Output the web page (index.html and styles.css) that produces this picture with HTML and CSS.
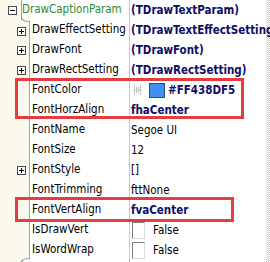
FILE: index.html
```html
<!DOCTYPE html>
<html lang="en">
<head>
    <meta charset="UTF-8">
    <title>Property Inspector</title>
    <link rel="stylesheet" href="styles.css">
</head>
<body>
    <div class="inspector">
        <div class="grid">
            <div class="row head">
                <div class="gut"><span class="tog minus"></span></div>
                <div class="name cat">DrawCaptionParam</div>
                <div class="val b">(TDrawTextParam)</div>
            </div>
            <div class="kids">
                <div class="row">
                    <div class="gut"><span class="tog plus"></span></div>
                    <div class="name">DrawEffectSetting</div>
                    <div class="val b">(TDrawTextEffectSetting)</div>
                </div>
                <div class="row">
                    <div class="gut"><span class="tog plus"></span></div>
                    <div class="name">DrawFont</div>
                    <div class="val b">(TDrawFont)</div>
                </div>
                <div class="row">
                    <div class="gut"><span class="tog plus"></span></div>
                    <div class="name">DrawRectSetting</div>
                    <div class="val b">(TDrawRectSetting)</div>
                </div>
                <div class="row">
                    <div class="gut"></div>
                    <div class="name">FontColor</div>
                    <div class="val b">
                        <svg class="pick" width="11" height="12" viewBox="0 0 11 12">
                            <path d="M0.5 6H10.5M2.5 1V11M8.5 1V11M4.5 3V9M6.5 3V9" stroke="#c4c4c4" fill="none"/>
                        </svg>
                        <span class="swatch"></span>#FF438DF5
                    </div>
                </div>
                <div class="row">
                    <div class="gut"></div>
                    <div class="name">FontHorzAlign</div>
                    <div class="val b">fhaCenter</div>
                </div>
                <div class="row">
                    <div class="gut"></div>
                    <div class="name">FontName</div>
                    <div class="val">Segoe UI</div>
                </div>
                <div class="row">
                    <div class="gut"></div>
                    <div class="name">FontSize</div>
                    <div class="val">12</div>
                </div>
                <div class="row">
                    <div class="gut"><span class="tog plus"></span></div>
                    <div class="name">FontStyle</div>
                    <div class="val">[]</div>
                </div>
                <div class="row">
                    <div class="gut"></div>
                    <div class="name">FontTrimming</div>
                    <div class="val">fttNone</div>
                </div>
                <div class="row">
                    <div class="gut"></div>
                    <div class="name">FontVertAlign</div>
                    <div class="val b">fvaCenter</div>
                </div>
                <div class="row">
                    <div class="gut"></div>
                    <div class="name">IsDrawVert</div>
                    <div class="val"><span class="check"></span>False</div>
                </div>
                <div class="row">
                    <div class="gut"></div>
                    <div class="name">IsWordWrap</div>
                    <div class="val"><span class="check"></span>False</div>
                </div>
            </div>
            <div class="row head">
                <div class="gut"></div>
                <div class="name cat"></div>
                <div class="val"></div>
            </div>
        </div>
        <div class="scroll"></div>
    </div>

    <!-- highlight boxes drawn over the grid -->
    <div class="mark mark-color"></div>
    <div class="mark mark-vert"></div>
</body>
</html>
```

FILE: styles.css
```css
body {
    margin: 0;
    background-color: #ffffff;
    font-family: "DejaVu Sans Condensed", "DejaVu Sans", sans-serif;
    font-size: 11.5px;
    color: #000000;
    overflow: hidden;
}
.inspector {
    display: flex;
    width: 270px;
    height: 262px;
    overflow: hidden;
}
.grid {
    width: 266px;
    flex: none;
}
.scroll {
    width: 4px;
    flex: none;
    background: repeating-conic-gradient(#d4d0c8 0 25%, #ffffff 0 50%) 0 0 / 2px 2px;
}
.row {
    display: flex;
    height: 20px;
    line-height: 19px;
    white-space: nowrap;
}
.gut {
    width: 30px;
    flex: none;
    background-color: #fbf9ee;
    border-right: 1px solid #a3a6a3;
    display: flex;
    align-items: center;
    justify-content: flex-end;
    padding-right: 3px;
    box-sizing: border-box;
}
.head .gut {
    width: 22px;
    padding-right: 4px;
}
.name {
    width: 100px;
    flex: none;
    padding-left: 2px;
    box-sizing: border-box;
    border-right: 1px solid #c9c9c9;
    overflow: hidden;
}
.head .name {
    width: 108px;
    padding-left: 0;
}
.cat {
    color: #2c8a2c;
}
.val {
    flex: 1;
    padding-left: 1px;
    display: flex;
    align-items: center;
    color: #000000;
}
.val.b {
    font-weight: bold;
    color: #0e0e66;
}
.kids {
    position: relative;
}
.kids::before,
.kids::after {
    content: "";
    position: absolute;
    left: 21px;
    width: 8px;
    height: 5px;
    border-left: 1px solid #a3a6a3;
}
.kids::before {
    top: -4px;
    border-bottom: 1px solid #a3a6a3;
    border-bottom-left-radius: 6px;
}
.kids::after {
    bottom: -4px;
    border-top: 1px solid #a3a6a3;
    border-top-left-radius: 6px;
}
.kids .row:first-child .gut {
    border-top: 2px solid transparent;
}
.kids .row:last-child .gut {
    border-bottom: 2px solid transparent;
}
.tog {
    width: 9px;
    height: 9px;
    box-sizing: border-box;
    border: 1px solid #4a4a4a;
    background-color: #ffffff;
    position: relative;
}
.tog::before {
    content: "";
    position: absolute;
    left: 1px;
    top: 3px;
    width: 5px;
    height: 1px;
    background-color: #000000;
}
.tog.plus::after {
    content: "";
    position: absolute;
    left: 3px;
    top: 1px;
    width: 1px;
    height: 5px;
    background-color: #000000;
}
.pick {
    margin-left: 1px;
    margin-right: 6px;
}
.swatch {
    width: 16px;
    height: 15px;
    box-sizing: border-box;
    border: 1px solid #1f4f9a;
    background-color: #438df5;
    margin-right: 3px;
}
.check {
    width: 13px;
    height: 17px;
    box-sizing: border-box;
    border-left: 1px solid #7d7d7d;
    border-top: 1px solid #7d7d7d;
    border-right: 1px solid #dcdcdc;
    border-bottom: 1px solid #dcdcdc;
    margin-left: 1px;
    margin-right: 8px;
}
.mark {
    position: absolute;
    border: 3px solid #e43d40;
    box-sizing: border-box;
}
.mark-color {
    left: 15px;
    top: 78px;
    width: 229px;
    height: 41px;
}
.mark-vert {
    left: 15px;
    top: 197px;
    width: 219px;
    height: 25px;
}
```
